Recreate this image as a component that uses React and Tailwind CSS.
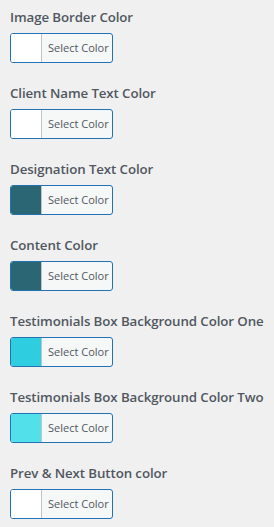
import React from "react";

const fields = [
  { label: "Image Border Color", color: "#ffffff" },
  { label: "Client Name Text Color", color: "#ffffff" },
  { label: "Designation Text Color", color: "#2a6673" },
  { label: "Content Color", color: "#2a6673" },
  { label: "Testimonials Box Background Color One", color: "#2ecde0" },
  { label: "Testimonials Box Background Color Two", color: "#52e0ea" },
  { label: "Prev & Next Button color", color: "#ffffff" },
];

const ColorField = ({ label, color }) => (
  <div className="h-[76px] pt-[8px]">
    <div className="text-[13.3px] leading-[18px] font-semibold text-[#50575e] whitespace-nowrap tracking-[-0.1px]">
      {label}
    </div>
    <button className="mt-[7px] flex h-[30px] w-[103px] overflow-hidden rounded-[3px] border border-[#2271b1] bg-[#f6f7f7]">
      <span className="h-full w-[31px] border-r border-[#c3c4c7]" style={{ backgroundColor: color }}></span>
      <span className="flex-1 pl-[6px] text-left text-[11px] leading-[28px] text-[#50575e]">Select Color</span>
    </button>
  </div>
);

export default function App() {
  return (
    <div className="min-h-[527px] w-[274px] bg-[#f0f0f1] pl-[10px] font-['Open_Sans',sans-serif]">
      {fields.map((f) => (
        <ColorField key={f.label} {...f} />
      ))}
    </div>
  );
}
